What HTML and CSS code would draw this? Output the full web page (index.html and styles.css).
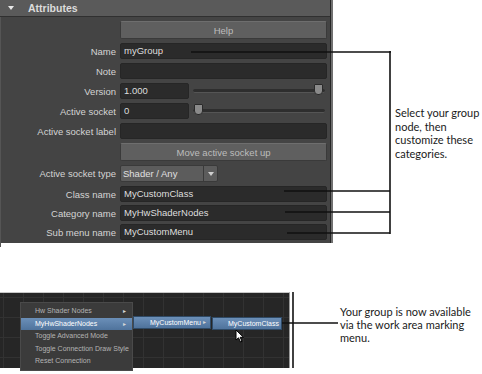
FILE: index.html
```html
<!DOCTYPE html>
<html lang="en">

<head>
    <meta charset="UTF-8">
    <meta name="viewport" content="width=device-width, initial-scale=1.0">
    <title>Custom group node</title>
    <link rel="stylesheet" href="styles.css">
</head>

<body>
    <div class="page">
        <!-- Attribute editor with the callout -->
        <div class="top">
            <div class="editor">
                <div class="editor-head">
                    <span class="caret"></span>
                    <span class="editor-title">Attributes</span>
                </div>
                <div class="editor-body">
                    <div class="row row-btn">
                        <span class="label"></span>
                        <button class="btn">Help</button>
                    </div>
                    <div class="row">
                        <span class="label">Name</span>
                        <div class="field">myGroup<span class="red-dot"></span></div>
                    </div>
                    <div class="row">
                        <span class="label">Note</span>
                        <div class="field"></div>
                    </div>
                    <div class="row">
                        <span class="label">Version</span>
                        <div class="field field-small">1.000</div>
                        <div class="slider"><span class="handle handle-end"></span></div>
                    </div>
                    <div class="row">
                        <span class="label">Active socket</span>
                        <div class="field field-small">0</div>
                        <div class="slider"><span class="handle"></span></div>
                    </div>
                    <div class="row">
                        <span class="label">Active socket label</span>
                        <div class="field"></div>
                    </div>
                    <div class="row row-btn">
                        <span class="label"></span>
                        <button class="btn">Move active socket up</button>
                    </div>
                    <div class="row row-select">
                        <span class="label">Active socket type</span>
                        <div class="select">
                            <span class="select-text">Shader / Any</span>
                            <span class="select-arrow"></span>
                        </div>
                    </div>
                    <div class="row">
                        <span class="label">Class name</span>
                        <div class="field">MyCustomClass</div>
                    </div>
                    <div class="row row-tight">
                        <span class="label">Category name</span>
                        <div class="field">MyHwShaderNodes</div>
                    </div>
                    <div class="row row-tight">
                        <span class="label">Sub menu name</span>
                        <div class="field">MyCustomMenu</div>
                    </div>
                </div>
            </div>
            <p class="note note-top">Select your group<br>node, then<br>customize these<br>categories.</p>
        </div>

        <!-- Work area marking menu -->
        <div class="bottom">
            <div class="canvas">
                <ul class="menu">
                    <li>Hw Shader Nodes <span class="sub">&#9656;</span></li>
                    <li class="active">MyHwShaderNodes <span class="sub">&#9656;</span></li>
                    <li>Toggle Advanced Mode</li>
                    <li>Toggle Connection Draw Style</li>
                    <li>Reset Connection</li>
                </ul>
                <div class="submenu">MyCustomMenu <span class="sub">&#9656;</span></div>
                <div class="submenu submenu-class">MyCustomClass</div>
                <svg class="cursor" width="10" height="14" viewBox="0 0 10 14">
                    <path d="M1 1 L1 11 L3.5 8.8 L5.5 13 L7 12.3 L5.2 8.3 L8.5 8.3 Z" fill="#fff" stroke="#000" stroke-width="1"/>
                </svg>
            </div>
            <p class="note note-bottom">Your group is now available<br>via the work area marking<br>menu.</p>
        </div>

        <!-- Callout lines -->
        <svg class="callouts" width="482" height="374">
            <g stroke="#111" stroke-width="1.6" fill="none">
                <line x1="191" y1="52" x2="391" y2="52"/>
                <line x1="390" y1="51" x2="390" y2="234"/>
                <line x1="284" y1="191" x2="390" y2="191"/>
                <line x1="285" y1="212" x2="390" y2="212"/>
                <line x1="287" y1="233" x2="390" y2="233"/>
                <line x1="293" y1="292" x2="293" y2="368"/>
                <line x1="282" y1="323" x2="338" y2="323"/>
            </g>
        </svg>
    </div>
</body>

</html>
```

FILE: styles.css
```css
body {
    margin: 0;
    background-color: #fff;
    font-family: "Liberation Sans", Arial, sans-serif;
}

.page {
    position: relative;
    width: 482px;
    height: 374px;
    overflow: hidden;
}

.top {
    display: flex;
}

.editor {
    width: 331px;
    height: 243px;
    background-color: #444;
    border-right: 1px solid #262626;
    box-shadow: 2px 0 0 #707070;
    box-sizing: border-box;
}

.editor-head {
    height: 16px;
    background-color: #5a5a5a;
    border-bottom: 1px solid #303030;
    display: flex;
    align-items: center;
}

.caret {
    width: 0;
    height: 0;
    margin-left: 8px;
    border-left: 3.5px solid transparent;
    border-right: 3.5px solid transparent;
    border-top: 4px solid #e8e8e8;
}

.editor-title {
    margin-left: 14px;
    font-weight: bold;
    font-size: 10.5px;
    color: #dcdcdc;
}

.editor-body {
    display: flex;
    flex-direction: column;
    gap: 4px;
    padding-top: 4px;
    border-left: 1px solid #555;
    height: 226px;
}

.row {
    display: flex;
    align-items: center;
    height: 16px;
}

.row-btn {
    height: 18px;
}

.row-tight {
    margin-top: -1px;
}

.label {
    width: 119px;
    padding-right: 4px;
    text-align: right;
    font-size: 9.5px;
    color: #d4d4d4;
    flex-shrink: 0;
    box-sizing: border-box;
}

.btn {
    width: 207px;
    height: 18px;
    padding: 0;
    background-color: #5f5f5f;
    border: 1px solid #3a3a3a;
    border-top-color: #6e6e6e;
    border-radius: 2px;
    font-family: "Liberation Sans", Arial, sans-serif;
    font-size: 9.5px;
    color: #bdbdbd;
}

.field {
    position: relative;
    width: 207px;
    height: 16px;
    line-height: 14px;
    padding-left: 3px;
    background-color: #2b2b2b;
    border: 1px solid #262626;
    border-radius: 2px;
    box-sizing: border-box;
    font-size: 9.5px;
    color: #dedede;
}

.field-small {
    width: 69px;
}

.red-dot {
    position: absolute;
    left: 40px;
    top: 7px;
    width: 1px;
    height: 1px;
    background-color: #b33;
}

.slider {
    position: relative;
    width: 132px;
    height: 3px;
    margin-left: 4px;
    background-color: #2e2e2e;
    border-bottom: 1px solid #555;
    border-radius: 2px;
}

.handle {
    position: absolute;
    left: 1px;
    top: -5px;
    width: 7px;
    height: 9px;
    background-color: #8a8a8a;
    border: 1px solid #2a2a2a;
    border-radius: 1px 1px 4px 4px;
}

.handle-end {
    left: auto;
    right: 2px;
}

.row-select {
    height: 17px;
}

.select {
    display: flex;
    width: 98px;
    height: 17px;
    background-color: #5c5c5c;
    border: 1px solid #3a3a3a;
    border-radius: 2px;
    box-sizing: border-box;
}

.select-text {
    flex: 1;
    padding-left: 2px;
    line-height: 15px;
    font-size: 9.5px;
    color: #e0e0e0;
}

.select-arrow {
    width: 13px;
    border-left: 1px solid #3a3a3a;
    display: flex;
    align-items: center;
    justify-content: center;
}

.select-arrow::after {
    content: "";
    border-left: 3px solid transparent;
    border-right: 3px solid transparent;
    border-top: 4px solid #cfcfcf;
}

.note {
    margin: 0;
    font-family: Lato, "Open Sans", sans-serif;
    font-size: 11px;
    line-height: 13.5px;
    color: #1a1a1a;
}

.note-top {
    margin-left: 64px;
    padding-top: 106px;
}

.bottom {
    display: flex;
    margin-top: 49px;
}

.canvas {
    position: relative;
    width: 290px;
    height: 76px;
    background-color: #262626;
    background-image:
        linear-gradient(to right, #323232 1px, transparent 1px),
        linear-gradient(to bottom, #323232 1px, transparent 1px);
    background-size: 20px 20px;
    background-position: 3px 4px;
    border-top: 1px solid #c8c8c8;
    border-right: 1px solid #9a9a9a;
    box-sizing: border-box;
}

.menu {
    position: absolute;
    left: 20px;
    top: 9px;
    width: 113px;
    margin: 0;
    padding: 2px 0;
    list-style: none;
    background-color: #3b3b3b;
    border: 1px solid #4a4a4a;
    box-sizing: border-box;
}

.menu li {
    position: relative;
    height: 12.5px;
    line-height: 12.5px;
    padding-left: 14px;
    font-size: 7px;
    color: #b4b4b4;
    white-space: nowrap;
}

.menu li.active {
    background: linear-gradient(#6b8fb8, #4f739c);
    color: #fff;
}

.sub {
    position: absolute;
    right: 6px;
    font-size: 6px;
    color: #d8d8d8;
}

.submenu {
    position: absolute;
    left: 133px;
    top: 23px;
    width: 78px;
    height: 13px;
    line-height: 11px;
    padding-left: 16px;
    background: linear-gradient(#6b8fb8, #4f739c);
    border: 1px solid #2f4a66;
    box-sizing: border-box;
    font-size: 7px;
    color: #fff;
    white-space: nowrap;
}

.submenu .sub {
    right: 4px;
}

.submenu-class {
    left: 212px;
    top: 24px;
    width: 70px;
    padding-left: 15px;
}

.cursor {
    position: absolute;
    left: 235px;
    top: 36px;
}

.note-bottom {
    margin-left: 50px;
    padding-top: 13px;
    line-height: 13px;
}

.callouts {
    position: absolute;
    left: 0;
    top: 0;
    pointer-events: none;
}
```
